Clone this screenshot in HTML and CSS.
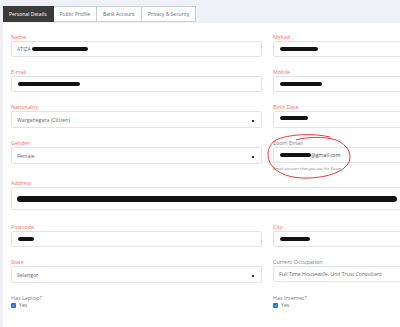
FILE: index.html
```html
<!DOCTYPE html>
<html>
<head>
<meta charset="utf-8">
<link rel="stylesheet" href="styles.css">
</head>
<body>
<div class="page">
  <div class="tabs">
    <div class="tab active">Personal Details</div>
    <div class="tab">Public Profile</div>
    <div class="tab">Bank Account</div>
    <div class="tab">Privacy &amp; Security</div>
  </div>
  <div class="panel">
    <div class="grid">
      <div class="field">
        <label class="req">Name</label>
        <div class="input"><span>ATIZA</span><span class="redact" style="width:56px"></span></div>
      </div>
      <div class="field">
        <label class="req">MyKad</label>
        <div class="input"><span class="redact" style="width:38px"></span></div>
      </div>
      <div class="field">
        <label class="req">E-mail</label>
        <div class="input"><span class="redact" style="width:62px"></span></div>
      </div>
      <div class="field">
        <label class="req">Mobile</label>
        <div class="input"><span class="redact" style="width:42px"></span></div>
      </div>
      <div class="field">
        <label class="req">Nationality</label>
        <div class="input select">Warganegara (Citizen)<i class="dot"></i></div>
      </div>
      <div class="field">
        <label class="req">Birth Date</label>
        <div class="input select"><span class="redact" style="width:28px"></span></div>
      </div>
      <div class="field">
        <label class="req">Gender</label>
        <div class="input select">Female<i class="dot"></i></div>
      </div>
      <div class="field helped">
        <label>Zoom Email</label>
        <div class="input"><span class="redact" style="width:31px"></span><span class="dark">@gmail.com</span></div>
        <small class="help">Email account that you use for Zoom</small>
      </div>
      <div class="field wide">
        <label class="req">Address</label>
        <div class="input tall"><span class="redact long"></span></div>
      </div>
      <div class="field">
        <label class="req">Postcode</label>
        <div class="input"><span class="redact" style="width:16px"></span></div>
      </div>
      <div class="field">
        <label class="req">City</label>
        <div class="input"><span class="redact" style="width:30px"></span></div>
      </div>
      <div class="field">
        <label class="req">State</label>
        <div class="input select">Selangor<i class="dot"></i></div>
      </div>
      <div class="field">
        <label>Current Occupation</label>
        <div class="input">Full Time Housewife, Unit Trust Consultant</div>
      </div>
      <div class="field">
        <label>Has Laptop?</label>
        <div class="check"><span class="box">&#10003;</span>Yes</div>
      </div>
      <div class="field">
        <label>Has Internet?</label>
        <div class="check"><span class="box">&#10003;</span>Yes</div>
      </div>
    </div>
  </div>
  <svg class="circle" width="100" height="52" viewBox="0 0 100 52">
    <path d="M64 5 C48 1 22 2 10 8 C2 13 0 22 4 31 C10 42 26 47 44 46 C62 45 78 40 83 30 C86 22 82 13 70 8 C58 4 40 5 30 8" fill="none" stroke="#e8202a" stroke-width="0.9"/>
  </svg>
</div>
</body>
</html>
```
FILE: styles.css
```css
html, body { margin: 0; padding: 0; }
body {
  background: #f0f1f6;
  font-family: "Open Sans", "Liberation Sans", sans-serif;
  color: #5c6873;
}
.page {
  position: relative;
  box-sizing: border-box;
  padding: 6px 0 0 3px;
  width: 400px;
  height: 327px;
  overflow: hidden;
}
.tabs { display: flex; height: 16px; }
.tab {
  box-sizing: border-box;
  height: 16px;
  padding: 0 6px;
  display: flex;
  align-items: center;
  font-size: 5px;
  color: #5c6873;
  background: #fff;
  border: 1px solid #c8ced3;
  border-left: none;
}
.tab.active { background: #3b3b3b; color: #fff; border-color: #3b3b3b; }
.panel {
  margin-top: 1px;
  background: #fff;
  padding: 11px 0 30px 8px;
}
.grid {
  display: grid;
  grid-template-columns: 251px 251px;
  column-gap: 11px;
}
.field { display: flex; flex-direction: column; padding-bottom: 12px; }
.field.helped { padding-bottom: 9px; }
.field.wide { grid-column: 1 / span 2; padding-bottom: 14px; }
label {
  font-size: 5.4px;
  line-height: 6px;
  height: 6px;
  margin-bottom: 1px;
  color: #73818f;
}
label.req { color: #f86c6b; }
.input {
  box-sizing: border-box;
  height: 16px;
  border: 1px solid #e2e1ee;
  border-radius: 2px;
  padding: 0 5px;
  font-size: 5.2px;
  display: flex;
  align-items: center;
  position: relative;
  color: #5c6873;
}
.input.select { height: 17px; align-items: flex-start; padding-top: 4px; }
.input.tall { height: 23px; padding-left: 4px; }
.dot {
  position: absolute;
  right: 7px;
  top: 8px;
  width: 2px;
  height: 1.5px;
  background: #333;
}
.redact {
  display: inline-block;
  height: 4px;
  background: #111;
  border-radius: 3px;
  margin-left: 1px;
}
.redact.long { width: 380px; height: 6px; border-radius: 4px; }
.dark { color: #3e4a56; }
.help { font-size: 4px; color: #73818f; margin-top: 3px; line-height: 5px; }
.check { display: flex; align-items: center; font-size: 5.2px; gap: 3px; height: 6px; }
.box {
  width: 5px; height: 5px;
  background: #1a73e8;
  color: #fff;
  font-size: 4px;
  line-height: 5px;
  text-align: center;
  border-radius: 1px;
}
.circle { position: absolute; left: 266px; top: 132px; }
```
